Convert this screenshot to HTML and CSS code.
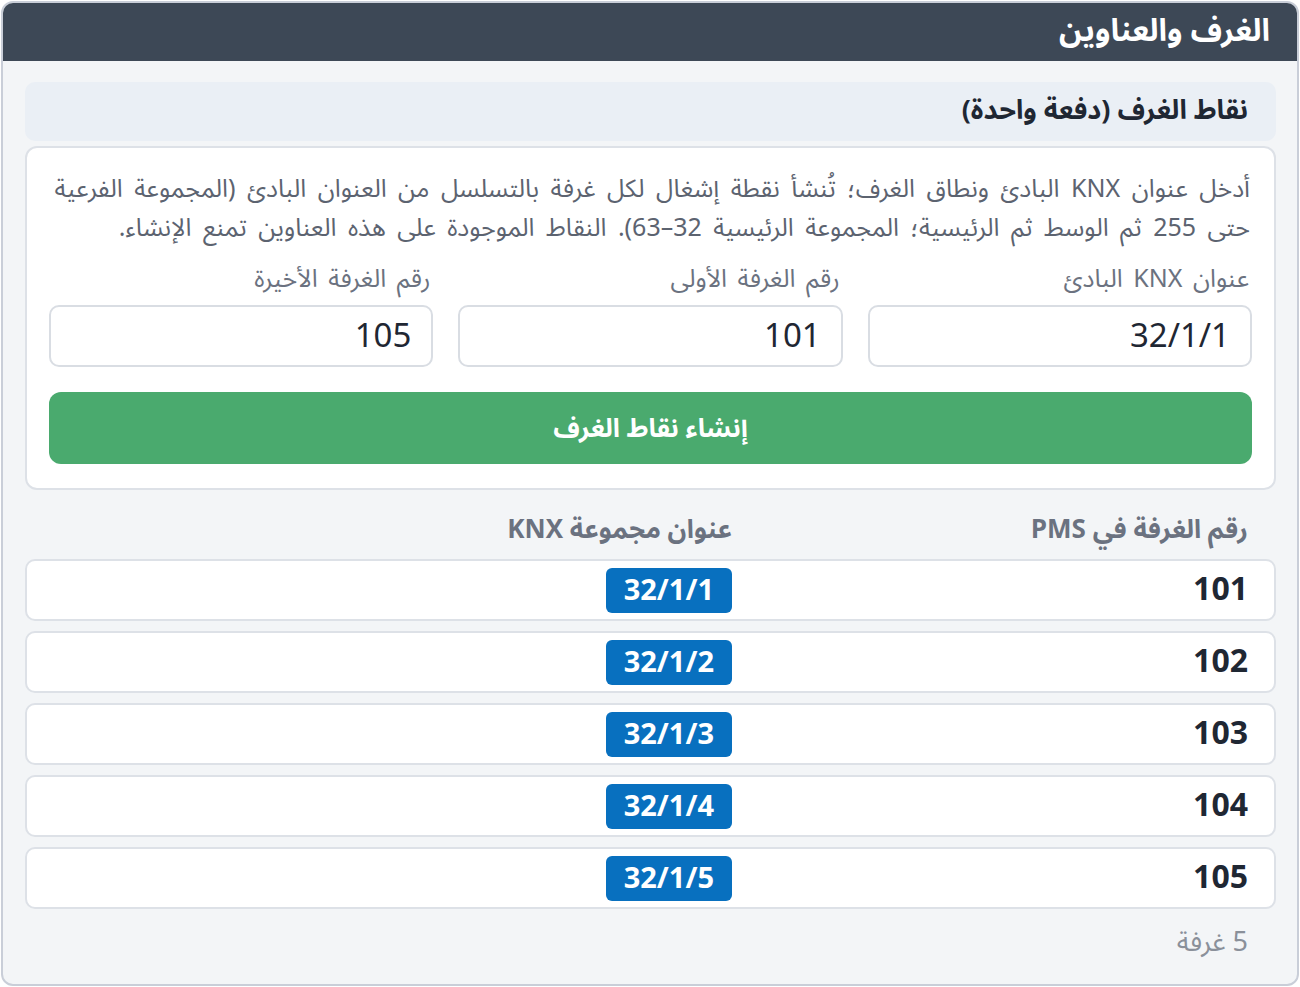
FILE: index.html
```html
<!DOCTYPE html>
<html lang="ar" dir="rtl">
<head>
<meta charset="utf-8">
<title>الغرف والعناوين</title>
<link rel="stylesheet" href="styles.css">
</head>
<body>
<div class="card">
  <div class="card-head"><span class="card-title">الغرف والعناوين</span></div>
  <div class="card-body">
    <div class="section-title">نقاط الغرف (دفعة واحدة)</div>
    <div class="form-card">
      <p class="desc">أدخل عنوان KNX البادئ ونطاق الغرف؛ تُنشأ نقطة إشغال لكل غرفة بالتسلسل من العنوان البادئ (المجموعة الفرعية حتى 255 ثم الوسط ثم الرئيسية؛ المجموعة الرئيسية 32–63). النقاط الموجودة على هذه العناوين تمنع الإنشاء.</p>
      <div class="fields">
        <label class="field"><span class="label">عنوان KNX البادئ</span><input class="input" type="text" value="32/1/1" dir="ltr"></label>
        <label class="field"><span class="label">رقم الغرفة الأولى</span><input class="input" type="text" value="101" dir="ltr"></label>
        <label class="field"><span class="label">رقم الغرفة الأخيرة</span><input class="input" type="text" value="105" dir="ltr"></label>
      </div>
      <button class="btn" type="button">إنشاء نقاط الغرف</button>
    </div>
    <div class="thead">
      <div class="col">رقم الغرفة في PMS</div>
      <div class="col">عنوان مجموعة KNX</div>
    </div>
    <div class="rows">
      <div class="row"><div class="col num">101</div><div class="col"><span class="badge">32/1/1</span></div></div>
      <div class="row"><div class="col num">102</div><div class="col"><span class="badge">32/1/2</span></div></div>
      <div class="row"><div class="col num">103</div><div class="col"><span class="badge">32/1/3</span></div></div>
      <div class="row"><div class="col num">104</div><div class="col"><span class="badge">32/1/4</span></div></div>
      <div class="row"><div class="col num">105</div><div class="col"><span class="badge">32/1/5</span></div></div>
    </div>
    <div class="count">5 غرفة</div>
  </div>
</div>
</body>
</html>
```
FILE: styles.css
```css
* { box-sizing: border-box; }
html, body { margin: 0; padding: 0; background: #ffffff; }
body {
  font-family: "Noto Sans Arabic", "Noto Sans", "DejaVu Sans", sans-serif;
  padding: 1px;
  width: 1300px;
}
.card {
  width: 1298px;
  height: 985px;
  border: 2px solid #c9ced8;
  border-radius: 12px;
  background: #f3f5f7;
  display: flex;
  flex-direction: column;
}
.card-head {
  background: #3d4856;
  color: #ffffff;
  height: 58px;
  flex: 0 0 58px;
  border-radius: 10px 10px 0 0;
  display: flex;
  align-items: center;
  padding: 0 27px 2px 20px;
}
.card-title {
  font-size: 31px;
  font-weight: 700;
  line-height: 50px;
}
.card-body {
  padding: 21px 21px 0 22px;
  display: flex;
  flex-direction: column;
}
.section-title {
  background: #eaeff5;
  border-radius: 10px;
  height: 59px;
  display: flex;
  align-items: center;
  padding: 0 28px 2px 20px;
  font-size: 27px;
  font-weight: 700;
  color: #1f2733;
}
.form-card {
  margin-top: 5px;
  background: #ffffff;
  border: 2px solid #dde1e7;
  border-radius: 12px;
  padding: 22px 22px 24px 22px;
}
.desc {
  margin: 0;
  font-size: 25px;
  word-spacing: 5px;
  line-height: 39px;
  color: #5c6370;
  padding-right: 2px;
}
.fields {
  margin-top: 12px;
  display: grid;
  grid-template-columns: repeat(3, minmax(0, 1fr));
  gap: 25px;
}
.field { display: flex; flex-direction: column; min-width: 0; }
.label {
  font-size: 25px;
  word-spacing: 4px;
  line-height: 38px;
  color: #6b7280;
  padding-right: 3px;
  margin-bottom: 7px;
}
.input {
  width: 100%;
  min-width: 0;
  height: 62px;
  border: 2px solid #d9dde3;
  border-radius: 10px;
  background: #ffffff;
  font-family: inherit;
  font-size: 33px;
  color: #1f2733;
  padding: 0 20px;
  text-align: right;
  outline: none;
}
.btn {
  margin-top: 25px;
  width: 100%;
  height: 72px;
  border: 0;
  border-radius: 12px;
  background: #4aaa6e;
  color: #ffffff;
  font-family: inherit;
  font-size: 26px;
  font-weight: 700;
  padding-bottom: 1px;
}
.thead {
  display: grid;
  grid-template-columns: 516px 1fr;
  height: 69px;
  align-items: center;
  padding: 11px 28px 0 28px;
  font-size: 26px;
  line-height: 36px;
  font-weight: 700;
  color: #6b7280;
}
.rows { display: flex; flex-direction: column; gap: 10px; }
.row {
  display: grid;
  grid-template-columns: 516px 1fr;
  align-items: center;
  height: 62px;
  background: #ffffff;
  border: 2px solid #dde1e7;
  border-radius: 10px;
  padding: 0 26px 0 28px;
  line-height: 40px;
}
.row .col { display: flex; align-items: center; height: 46px; }
.num {
  font-size: 32px;
  font-weight: 700;
  color: #1f2733;
}
.badge {
  display: inline-block;
  background: #0870bf;
  color: #ffffff;
  font-size: 29px;
  font-weight: 700;
  border-radius: 6px;
  padding: 0 18px;
  height: 45px;
  line-height: 45px;
  direction: ltr;
}
.count {
  margin-top: 5px;
  padding-right: 28px;
  font-size: 27px;
  color: #8a909a;
}
```
